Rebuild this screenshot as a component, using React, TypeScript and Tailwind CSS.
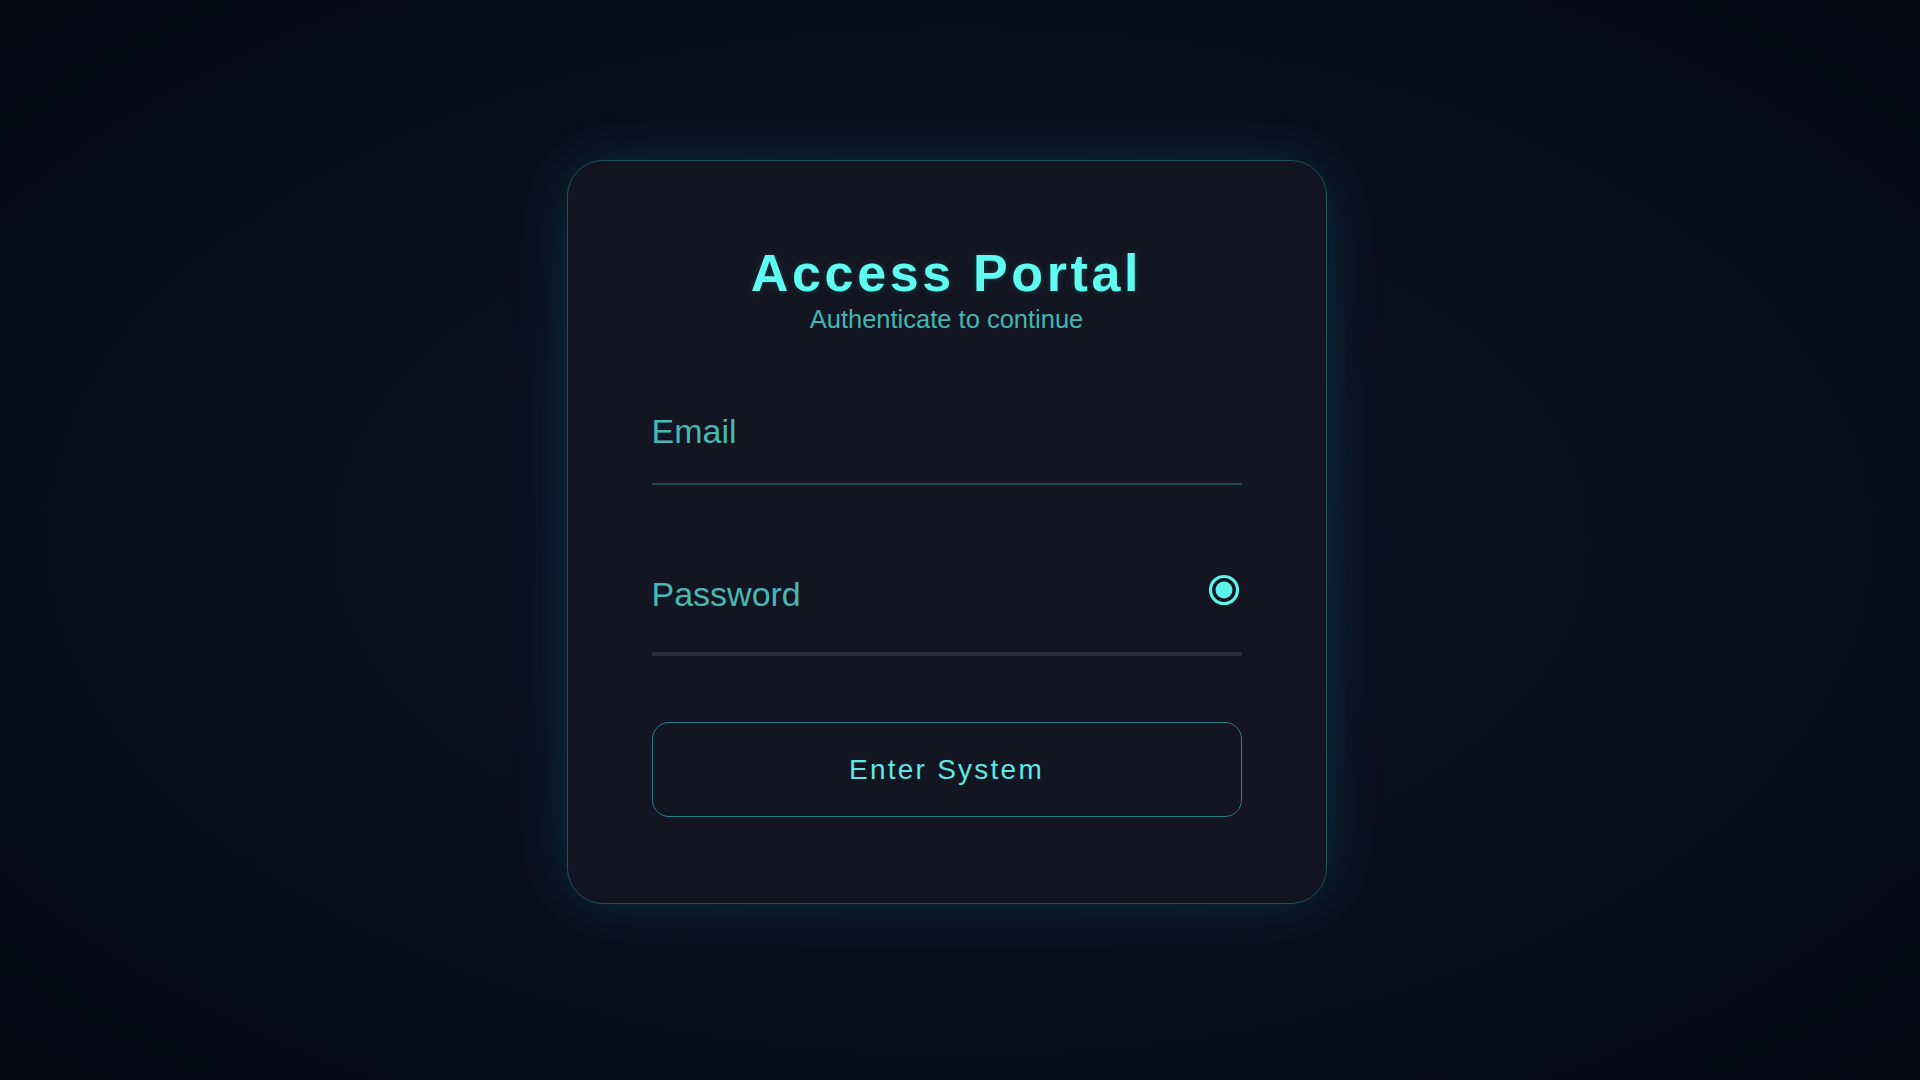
import { useState } from "react";

export default function App() {
  const [email, setEmail] = useState("");
  const [password, setPassword] = useState("");
  const [show, setShow] = useState(false);

  return (
    <div
      className="flex h-screen w-full items-center justify-center pr-[27px] pb-[16px] bg-[radial-gradient(ellipse_at_center,#0d1424_0%,#090d1b_55%,#060914_100%)]"
      style={{ fontFamily: '"Liberation Sans", Arial, sans-serif' }}
    >
      <div className="w-[760px] rounded-[36px] border border-[#1e535c] bg-[#131622] px-[84px] pt-[82px] pb-[86px] shadow-[0_0_60px_rgba(34,211,238,0.16)]">
        <div className="text-center">
          <h1 className="text-[52px] font-bold leading-[60px] tracking-[0.07em] text-[#5ffcf2] [text-shadow:0_0_6px_rgba(95,252,242,0.15)]">
            Access Portal
          </h1>
          <p className="mt-[2px] text-[25.5px] leading-[28px] text-[#45b5b1]">Authenticate to continue</p>
        </div>

        <form className="mt-[78px]" onSubmit={(e) => e.preventDefault()}>
          <div className="border-b-2 border-[#1d4a55] pb-[32px]">
            <input
              type="email"
              value={email}
              onChange={(e) => setEmail(e.target.value)}
              placeholder="Email"
              className="block w-full bg-transparent text-[34px] leading-[40px] text-[#45b5b1] outline-none placeholder:text-[#48b8b3]"
            />
          </div>

          <div className="mt-[89px] flex items-start justify-between border-b-4 border-[#2b2e3b] pb-[38px]">
            <input
              type={show ? "text" : "password"}
              value={password}
              onChange={(e) => setPassword(e.target.value)}
              placeholder="Password"
              className="block w-full bg-transparent text-[34px] leading-[40px] text-[#45b5b1] outline-none placeholder:text-[#48b8b3]"
            />
            <button
              type="button"
              onClick={() => setShow((s) => !s)}
              className="mr-[2px] shrink-0 text-[#5ef4ee]"
              aria-label="Toggle password"
            >
              <svg width="32" height="32" viewBox="0 0 32 32" fill="none">
                <circle cx="16" cy="16" r="13.5" stroke="currentColor" strokeWidth="3.2" />
                <circle cx="16" cy="16" r="8.5" fill="currentColor" />
              </svg>
            </button>
          </div>

          <button
            type="submit"
            className="mt-[66px] flex h-[95px] w-full items-center justify-center rounded-[17px] border-[1.5px] border-[#2e7c84] text-[28px] tracking-[0.08em] text-[#5ee8e3]"
          >
            Enter System
          </button>
        </form>
      </div>
    </div>
  );
}
